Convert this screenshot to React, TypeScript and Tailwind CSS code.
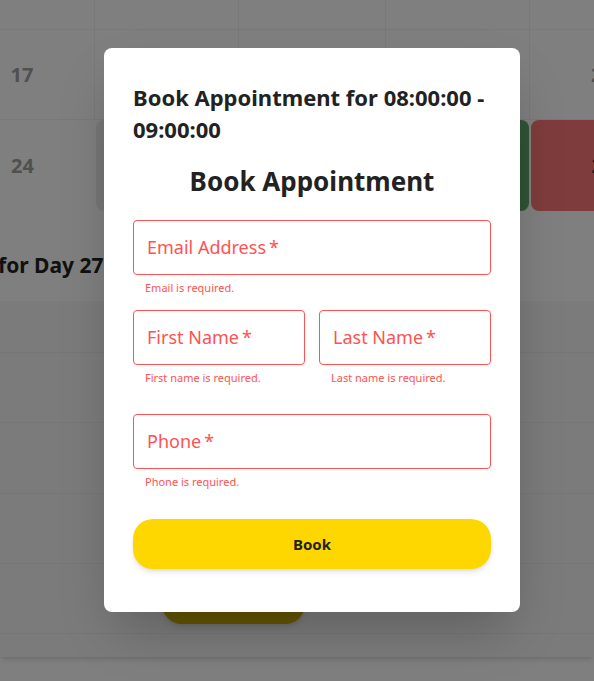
import React from "react";

const font = "font-['Comic_Sans_MS','Noto_Sans',sans-serif]";

const Field: React.FC<{ label: string; error: string; className?: string }> = ({ label, error, className }) => (
  <div className={className}>
    <div className="h-[55px] border border-[#ff5252] rounded flex items-center px-[13px]">
      <span className="text-[18px] text-[#ff5252]">{label}<span className="ml-[3px]">*</span></span>
    </div>
    <p className="text-[11px] leading-4 text-[#ff5252] ml-[12px] mt-[5px]">{error}</p>
  </div>
);

const App: React.FC = () => {
  return (
    <div className={`relative h-screen overflow-hidden bg-white ${font}`}>
      {/* page behind the dialog */}
      <div className="ml-[-50px] w-[725px]">
        <div className="grid grid-cols-[145px_144px_147px_144px_145px] h-[30px] border-b border-[#f2f2f2]">
          <div className="border-r border-[#f2f2f2]" />
          <div className="border-r border-[#f2f2f2]" />
          <div className="border-r border-[#f2f2f2]" />
          <div className="border-r border-[#f2f2f2]" />
          <div />
        </div>
        <div className="grid grid-cols-[145px_144px_147px_144px_145px] h-[90px] border-b border-[#f2f2f2] text-[20px] font-bold text-[#a0a0a0]">
          <div className="border-r border-[#f2f2f2] flex items-center justify-center">17</div>
          <div className="border-r border-[#f2f2f2]" />
          <div className="border-r border-[#f2f2f2]" />
          <div className="border-r border-[#f2f2f2]" />
          <div className="flex items-center justify-center">23</div>
        </div>
        <div className="grid grid-cols-[145px_144px_147px_144px_145px] h-[91px] text-[20px] font-bold">
          <div className="flex items-center justify-center text-[#a0a0a0]">24</div>
          <div className="bg-[#ececec] rounded-lg mx-[1px]" />
          <div className="bg-[#ececec] rounded-lg mx-[1px]" />
          <div className="bg-[#5fa866] rounded-lg mx-[1px]" />
          <div className="bg-[#ff7878] rounded-lg ml-[1px] flex items-center justify-center text-[#333]">25</div>
        </div>
      </div>
      <h2 className="mt-[40px] ml-[-2px] text-[21px] font-bold text-[#222] leading-7">for Day 27</h2>
      <div className="mt-[22px] bg-[#f6f6f6] shadow-md">
        <div className="h-[52px] border-b border-[#ececec]" />
        <div className="h-[70px] border-b border-[#ececec]" />
        <div className="h-[71px] border-b border-[#ececec]" />
        <div className="h-[70px] border-b border-[#ececec]" />
        <div className="h-[70px] border-b border-[#ececec] flex items-center">
          <div className="ml-[162px] h-[50px] w-[143px] rounded-[20px] bg-[#c9ab00] shadow-md flex items-center justify-center text-[15px] font-bold text-black">
            Book
          </div>
          <div className="ml-[25px] flex items-center gap-2 text-[15px] font-bold text-[#333]">
            <span className="w-[14px] h-[14px] rounded-full border-2 border-[#c9ab00]" />
            07:00 - 08:00
          </div>
        </div>
        <div className="h-[23px]" />
      </div>

      {/* dialog */}
      <div className="absolute inset-0 bg-black/50 flex justify-center items-start pt-[48px] pl-[30px]">
        <div className="w-[416px] bg-white rounded-lg shadow-2xl px-[29px] pt-[33px] pb-[43px] text-[#222]">
          <h3 className="text-[22px] leading-8 font-bold">Book Appointment for 08:00:00 - 09:00:00</h3>
          <h2 className="mt-[16px] text-[26px] leading-10 font-bold text-center">Book Appointment</h2>
          <Field className="mt-[19px]" label="Email Address" error="Email is required." />
          <div className="mt-[14px] grid grid-cols-2 gap-[14px]">
            <Field label="First Name" error="First name is required." />
            <Field label="Last Name" error="Last name is required." />
          </div>
          <Field className="mt-[28px]" label="Phone" error="Phone is required." />
          <button className="mt-[29px] w-full h-[50px] rounded-[20px] bg-[#ffd700] shadow-md text-[15px] font-bold text-[#222]">
            Book
          </button>
        </div>
      </div>
    </div>
  );
};

export default App;
